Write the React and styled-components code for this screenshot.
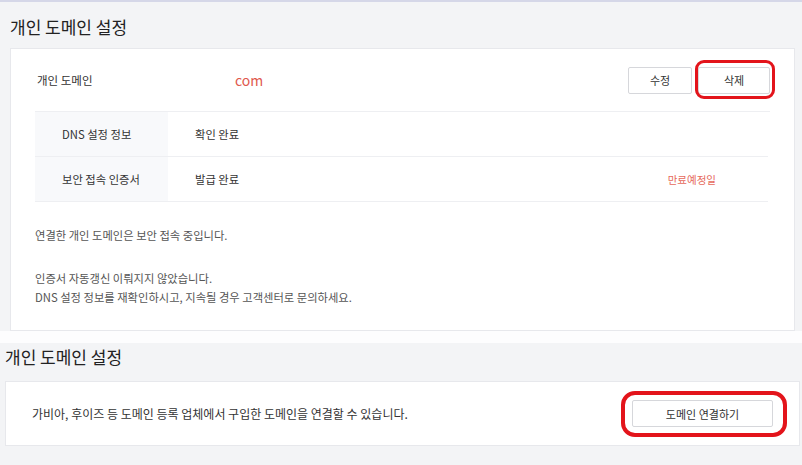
import React from "react";
import styled, { createGlobalStyle } from "styled-components";

const GlobalStyle = createGlobalStyle`
  body {
    margin: 0;
    background: #ffffff;
    font-family: "Noto Sans CJK KR", "Noto Sans", sans-serif;
    color: #333333;
  }
`;

const Page = styled.div`
  width: 802px;
  height: 465px;
  overflow: hidden;
  display: flex;
  flex-direction: column;
`;

const Section = styled.section`
  background: #f3f4f6;
  border-top: ${(p) => (p.$topLine ? "2px solid #d5d7e8" : "none")};
  padding: ${(p) => p.$pad};
  flex: ${(p) => (p.$grow ? 1 : "none")};
`;

const Band = styled.div`
  height: 12px;
  background: #fdfdfe;
`;

const Title = styled.h2`
  margin: 0 0 ${(p) => p.$gap}px 0;
  font-size: 17px;
  line-height: 24px;
  font-weight: 400;
  color: #222222;
`;

const Card = styled.div`
  background: #ffffff;
  border: 1px solid #e7e8ec;
  padding: ${(p) => p.$pad};
`;

const DomainRow = styled.div`
  display: flex;
  align-items: center;
  height: 62px;
  border-bottom: 1px solid #eeeff2;
`;

const DomainLabel = styled.div`
  width: 198px;
  padding-left: 2px;
  font-size: 11.5px;
  color: #333333;
`;

const DomainName = styled.div`
  flex: 1;
  font-size: 14px;
  color: #e0584c;
`;

const Buttons = styled.div`
  display: flex;
  gap: 6px;
`;

const Button = styled.button`
  width: ${(p) => p.$w}px;
  height: ${(p) => p.$h}px;
  background: #ffffff;
  border: 1px solid #d6d7db;
  border-radius: 2px;
  font-family: inherit;
  font-size: 11px;
  color: #333333;
  padding: 0;
`;

const Marked = styled.span`
  position: relative;
  display: inline-flex;
`;

const Ring = styled.span`
  position: absolute;
  inset: ${(p) => p.$inset};
  border: ${(p) => p.$bw}px solid #e3141b;
  border-radius: ${(p) => p.$r}px;
  pointer-events: none;
`;

const InfoTable = styled.div`
  display: flex;
  flex-direction: column;
  margin-right: 2px;
`;

const InfoRow = styled.div`
  display: flex;
  height: 44px;
  border-bottom: 1px solid #eeeff2;
`;

const InfoLabel = styled.div`
  width: 106px;
  padding-left: 27px;
  background: #f8f9fb;
  display: flex;
  align-items: center;
  font-size: 11.3px;
  color: #333333;
`;

const InfoValue = styled.div`
  flex: 1;
  padding: 0 52px 0 27px;
  display: flex;
  align-items: center;
  justify-content: space-between;
  font-size: 11.3px;
  color: #333333;
`;

const Expire = styled.span`
  font-size: 10.5px;
  color: #e66a5c;
`;

const Note = styled.p`
  margin: ${(p) => p.$top}px 0 0 0;
  font-size: 11.3px;
  line-height: 19px;
  color: #555555;
`;

const ConnectRow = styled.div`
  display: flex;
  align-items: center;
  justify-content: space-between;
  height: 63px;
`;

const ConnectText = styled.div`
  font-size: 12px;
  color: #333333;
`;

const App = () => {
  return (
    <Page>
      <GlobalStyle />
      <Section $topLine $pad="13px 7px 0 10px">
        <Title $gap={9}>개인 도메인 설정</Title>
        <Card $pad="0 24px 23px 24px">
          <DomainRow>
            <DomainLabel>개인 도메인</DomainLabel>
            <DomainName>com</DomainName>
            <Buttons>
              <Button $w={64} $h={27}>수정</Button>
              <Marked>
                <Button $w={72} $h={27}>삭제</Button>
                <Ring $inset="-7px -5px -5px -3px" $bw={3.5} $r={9} />
              </Marked>
            </Buttons>
          </DomainRow>
          <InfoTable>
            <InfoRow>
              <InfoLabel>DNS 설정 정보</InfoLabel>
              <InfoValue>확인 완료</InfoValue>
            </InfoRow>
            <InfoRow>
              <InfoLabel>보안 접속 인증서</InfoLabel>
              <InfoValue>
                <span>발급 완료</span>
                <Expire>만료예정일</Expire>
              </InfoValue>
            </InfoRow>
          </InfoTable>
          <Note $top={24}>연결한 개인 도메인은 보안 접속 중입니다.</Note>
          <Note $top={24}>
            인증서 자동갱신 이뤄지지 않았습니다.
            <br />
            DNS 설정 정보를 재확인하시고, 지속될 경우 고객센터로 문의하세요.
          </Note>
        </Card>
      </Section>
      <Band />
      <Section $grow $pad="2px 2px 0 5px">
        <Title $gap={12}>개인 도메인 설정</Title>
        <Card $pad="0 26px 0 26px">
          <ConnectRow>
            <ConnectText>
              가비아, 후이즈 등 도메인 등록 업체에서 구입한 도메인을 연결할 수 있습니다.
            </ConnectText>
            <Marked>
              <Button $w={141} $h={27}>도메인 연결하기</Button>
              <Ring $inset="-9px -14px -10px -11px" $bw={4} $r={14} />
            </Marked>
          </ConnectRow>
        </Card>
      </Section>
    </Page>
  );
};

export default App;
